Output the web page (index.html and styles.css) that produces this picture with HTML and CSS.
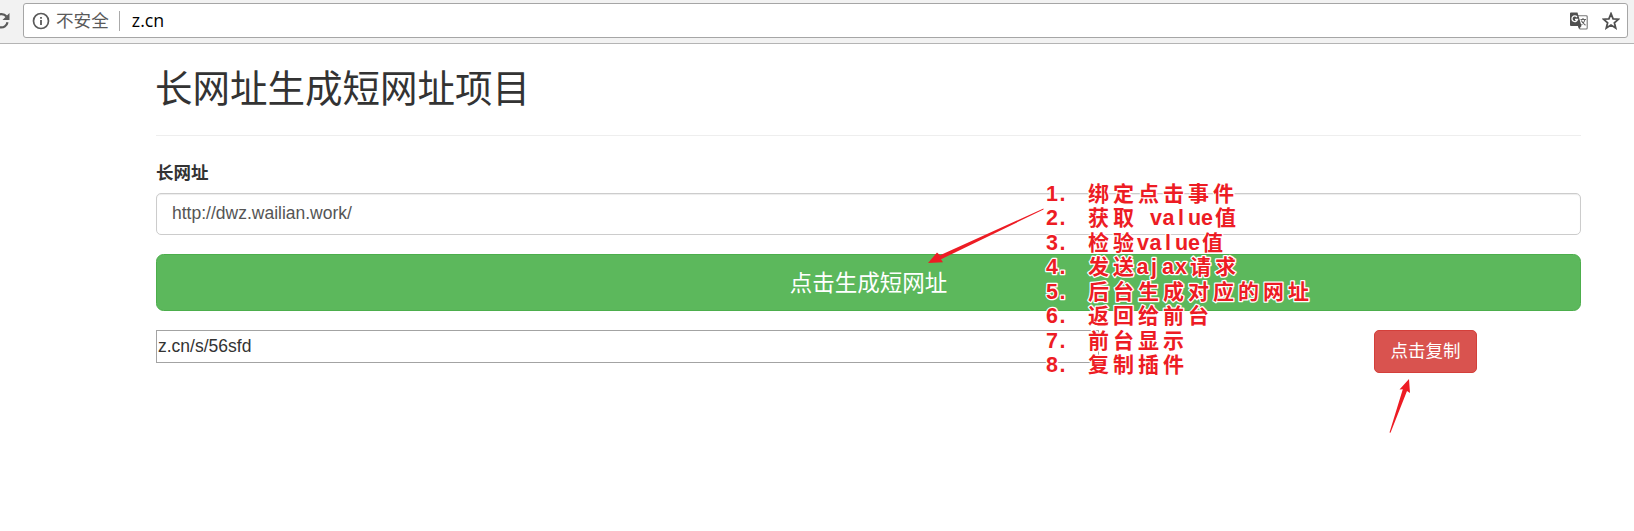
FILE: index.html
```html
<!DOCTYPE html>
<html lang="zh-CN">
<head>
<meta charset="utf-8">
<title>长网址生成短网址项目</title>
<link rel="stylesheet" href="styles.css">
</head>
<body>
<div class="toolbar">
  <svg class="reload" width="10" height="20" viewBox="0 0 10 20"><path d="M-5 10a6.200 6.200 0 0 0 12.500 2.200M6.500 6.500A6.500 6.500 0 0 0-4.500 8" fill="none" stroke="#5a5a5a" stroke-width="2.200"/><path d="M9.500 3v7H2.500z" fill="#5a5a5a"/></svg>
  <div class="address">
    <svg class="info" width="18" height="18" viewBox="0 0 18 18"><circle cx="9" cy="9" r="7.500" fill="none" stroke="#5a5a5a" stroke-width="1.700"/><path d="M8.100 8h1.800v5H8.100zM8.100 4.900h1.800v1.800H8.100z" fill="#5a5a5a"/></svg>
    <span class="insecure">不安全</span>
    <span class="divider"></span>
    <span class="url">z.cn</span>
    <svg class="translate" width="18" height="18" viewBox="0 0 18 18"><path d="M8 3.700h8.200a1 1 0 0 1 1 1V16a1 1 0 0 1-1 1H10L8.500 14" fill="#fff" stroke="#777" stroke-width="1.100"/><path d="M1 .5h6.500l4 13.500H1a1 1 0 0 1-1-1v-11.500a1 1 0 0 1 1-1z" fill="#505050"/><path d="M8 14h3.500L9 17z" fill="#505050"/><path d="M7 5A2.800 2.800 0 1 0 7.500 7.500H5" fill="none" stroke="#fff" stroke-width="1.300"/><path d="M10.500 7.500h5.500M13 6v1.500M15 7.500c-.5 2.500-2 4-3.500 5.200M11.300 8.500c1 2 2.500 3.500 4.200 4.800" fill="none" stroke="#666" stroke-width="1.100"/></svg>
    <svg class="star" width="18" height="18" viewBox="0 0 18 18"><path d="M9 1.700l2.100 5.100 5.400.4-4.100 3.500 1.300 5.300L9 13.100 4.300 16l1.300-5.300L1.500 7.200l5.400-.4z" fill="none" stroke="#505050" stroke-width="1.800"/></svg>
  </div>
</div>
<main class="container">
  <h1 class="title">长网址生成短网址项目</h1>
  <label class="label" for="long">长网址</label>
  <input class="field" id="long" type="text" value="http://dwz.wailian.work/">
  <button class="generate" type="button">点击生成短网址</button>
  <div class="result">
    <input class="short" type="text" value="z.cn/s/56sfd">
    <button class="copy" type="button">点击复制</button>
  </div>
</main>
<svg class="notes" width="1634" height="531" viewBox="0 0 1634 531">
  <path d="M1043.500 208.500L940 255.300 937 252.500 928 263 943 262.200 941 259.300 1043.500 209.500z" fill="#ed1c24"/>
  <path d="M1409 379l-9.500 10.500 3.300-.3L1389.500 432.500l1 .2L1407 391l3 2z" fill="#ed1c24"/>
  <g class="note">
    <text x="1046 1059.500" y="201">1.</text><text class="han" x="1088" y="201">绑定点击事件</text>
    <text x="1046 1059.500" y="225">2.</text><text class="han" x="1088" y="225">获取</text><text x="1150 1162.500 1178 1188 1201" y="225">value</text><text class="han" x="1215" y="225">值</text>
    <text x="1046 1059.500" y="250">3.</text><text class="han" x="1088" y="250">检验</text><text x="1137 1149.500 1165 1175 1188" y="250">value</text><text class="han" x="1202" y="250">值</text>
    <text x="1046 1059.500" y="274">4.</text><text class="han" x="1088" y="274">发送</text><text x="1136.500 1151 1162 1175" y="274">ajax</text><text class="han" x="1190" y="274">请求</text>
    <text x="1046 1059.500" y="299">5.</text><text class="han" x="1088" y="299">后台生成对应的网址</text>
    <text x="1046 1059.500" y="323">6.</text><text class="han" x="1088" y="323">返回给前台</text>
    <text x="1046 1059.500" y="348">7.</text><text class="han" x="1088" y="348">前台显示</text>
    <text x="1046 1059.500" y="372">8.</text><text class="han" x="1088" y="372">复制插件</text>
  </g>
</svg>
</body>
</html>
```
FILE: styles.css
```css
* { box-sizing: border-box; }
body {
  margin: 0;
  height: 531px;
  overflow: hidden;
  background: #fff;
  color: #333;
  font: 17.5px/25px "Liberation Sans", "Noto Sans CJK SC", sans-serif;
}
.toolbar {
  display: flex;
  height: 44px;
  padding: 3px 6px 0 0;
  background: #f2f2f2;
  border-bottom: 1px solid #b4b4b4;
}
.reload { margin: 7px 13px 0 0; }
.address {
  display: flex;
  align-items: center;
  flex: 1;
  height: 35px;
  padding: 0 7px 0 8px;
  background: #fff;
  border: 1px solid #a6a6a6;
  border-radius: 3px;
}
.insecure {
  margin: -2px 0 0 6px;
  color: #5a5a5a;
  font: 17.6px/25px "Noto Sans CJK SC", sans-serif;
}
.divider { width: 1px; height: 20px; margin: 0 12px 0 10px; background: #aaa; }
.url { flex: 1; color: #000; font: 17.8px/25px "Open Sans", sans-serif; }
.star { margin-left: 14px; }
.container {
  display: flex;
  flex-direction: column;
  width: 1425px;
  margin-left: 156px;
}
.title {
  height: 92px;
  margin: 0 0 23px;
  padding-top: 21px;
  border-bottom: 1px solid #eee;
  font: 37.5px/41px "Noto Sans CJK SC", sans-serif;
  text-indent: -1px;
}
.label { height: 34px; font-weight: 700; font-family: "Noto Sans CJK SC", sans-serif; }
.field {
  height: 42px;
  margin-bottom: 19px;
  padding: 0 15px 2px;
  color: #555;
  background: #fff;
  border: 1px solid #ccc;
  border-radius: 5px;
  box-shadow: inset 0 1px 1px rgba(0, 0, 0, .075);
  font: 17.5px/25px "Liberation Sans", sans-serif;
}
.generate {
  height: 57px;
  padding: 0 0 4px;
  color: #fff;
  background: #5cb85c;
  border: 1px solid #4cae4c;
  border-radius: 7.5px;
  font: 22.5px/30px "Noto Sans CJK SC", sans-serif;
}
.result {
  display: flex;
  align-items: flex-start;
  justify-content: space-between;
  padding: 19px 104px 0 0;
}
.short {
  width: 943px;
  height: 33px;
  padding: 0 1px 1px;
  color: #333;
  background: #fff;
  border: 1px solid #a3a3a3;
  font: 17.5px/25px "Liberation Sans", sans-serif;
}
.copy {
  width: 103px;
  height: 43px;
  padding: 0 0 4px;
  color: #fff;
  background: #d9534f;
  border: 1px solid #d43f3a;
  border-radius: 5px;
  font: 17.5px/25px "Noto Sans CJK SC", sans-serif;
}
.notes { position: absolute; top: 0; left: 0; pointer-events: none; }
.note {
  fill: #ed1c24;
  stroke: #fff;
  stroke-width: 2.5px;
  stroke-linejoin: round;
  paint-order: stroke;
  font: 700 21.5px "Liberation Sans", sans-serif;
}
.han { font: 700 21px "Noto Sans CJK SC", sans-serif; letter-spacing: 4px; }
```
